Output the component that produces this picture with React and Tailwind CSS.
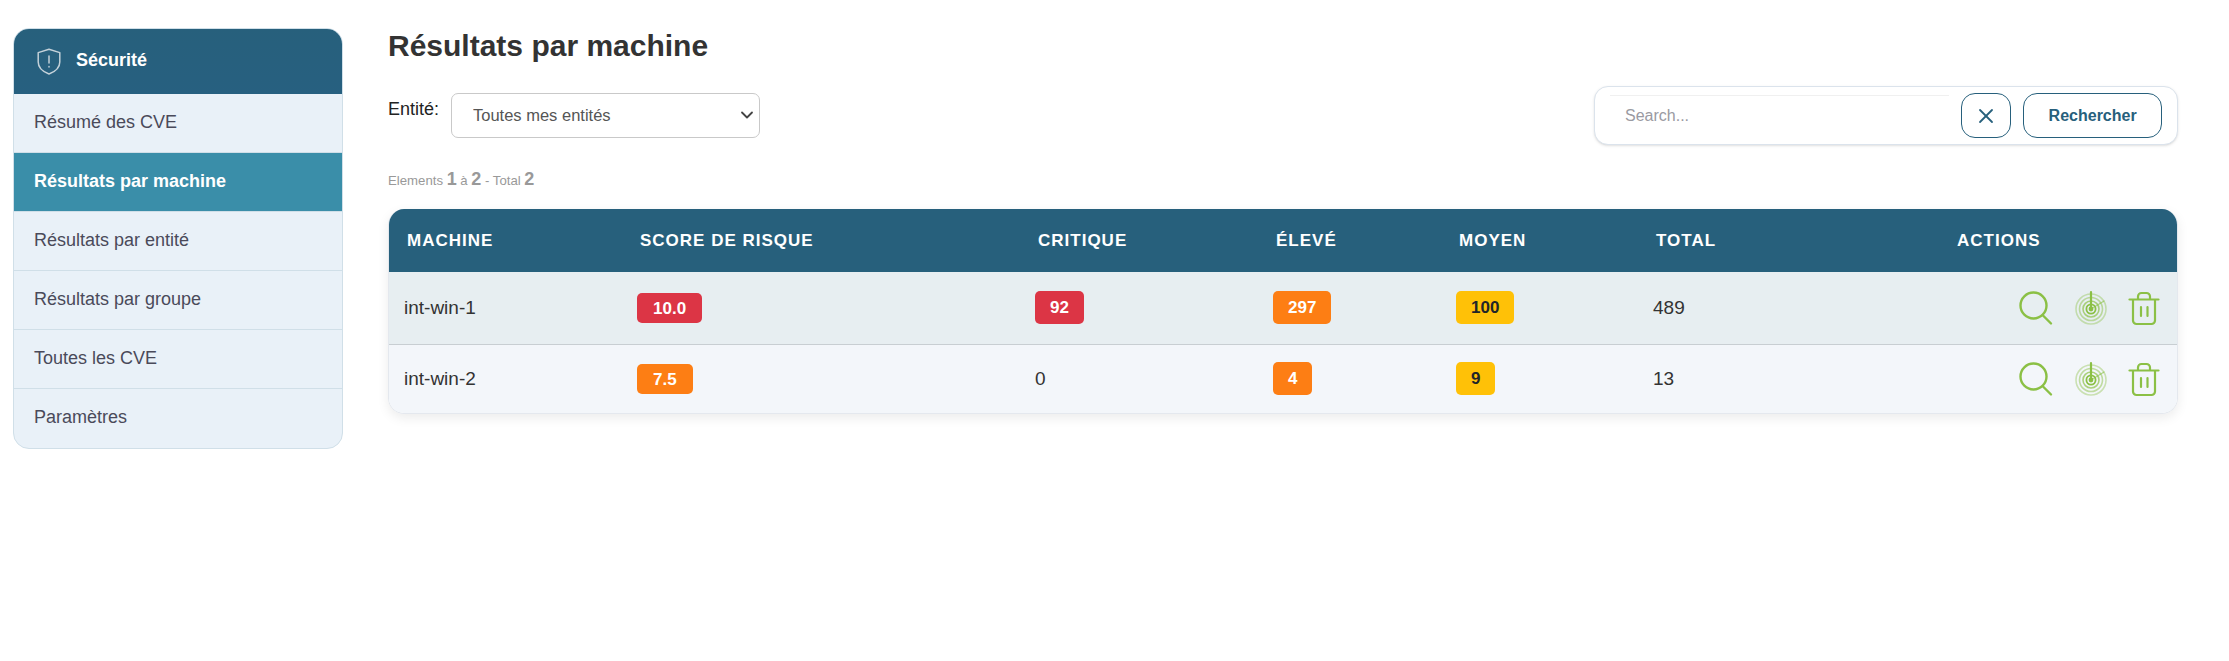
import { X, ChevronDown } from 'lucide-react';

const menu = ['Résumé des CVE', 'Résultats par machine', 'Résultats par entité', 'Résultats par groupe', 'Toutes les CVE', 'Paramètres'];

const rows = [
  { name: 'int-win-1', score: '10.0', scoreColor: 'bg-[#dc3545]', critique: '92', eleve: '297', moyen: '100', total: '489', bg: 'bg-[#e7eef1]', border: 'border-b border-[#c8ced2]', h: 'h-[72px]' },
  { name: 'int-win-2', score: '7.5', scoreColor: 'bg-[#fd7e14]', critique: 0, eleve: '4', moyen: '9', total: '13', bg: 'bg-[#f3f6fa]', border: '', h: 'h-[69px]' },
];

function Badge({ color, dark, small, children }) {
  return (
    <span className={`inline-flex items-center justify-center rounded-[5px] font-bold text-[17px] leading-none ${small ? 'h-[30px] px-[16px] mt-[1px]' : 'h-[33px] px-[15px]'} ${color} ${dark ? 'text-[#212529]' : 'text-white'}`}>
      {children}
    </span>
  );
}

function ShieldIcon() {
  return (
    <svg width="24" height="27" viewBox="0 0 24 27" fill="none" stroke="#c3d1d9" strokeWidth="1.5" strokeLinecap="round" strokeLinejoin="round">
      <path d="M12 1.2L22.8 4.6V14c0 5.6-4.4 9.6-10.8 12C5.6 23.6 1.2 19.6 1.2 14V4.6z" />
      <path d="M12 8v7" />
      <path d="M12 18.6v.4" />
    </svg>
  );
}

function SearchIcon() {
  return (
    <svg width="36" height="36" viewBox="0 0 36 36" fill="none" stroke="#8bc045" strokeWidth="2.4" strokeLinecap="round">
      <circle cx="15.5" cy="15.5" r="13" />
      <path d="M25 25.5l8 8" />
    </svg>
  );
}

function RadarIcon() {
  return (
    <svg width="34" height="36" viewBox="0 0 34 36" fill="none" stroke="#8bc045" strokeLinecap="round">
      <circle cx="17" cy="19" r="15" strokeWidth="1.6" opacity="0.4" />
      <circle cx="17" cy="19" r="11.5" strokeWidth="1.6" opacity="0.5" />
      <circle cx="17" cy="19" r="8" strokeWidth="1.6" opacity="0.7" />
      <circle cx="17" cy="19" r="4.6" strokeWidth="1.8" />
      <circle cx="17" cy="19" r="2.4" fill="#8bc045" stroke="none" />
      <path d="M17 19V2" strokeWidth="2.2" />
      <path d="M17 19l13-8" strokeWidth="1.4" opacity="0.6" />
    </svg>
  );
}

function TrashIcon() {
  return (
    <svg width="32" height="36" viewBox="0 0 32 36" fill="none" stroke="#8bc045" strokeWidth="2.2" strokeLinecap="round" strokeLinejoin="round">
      <path d="M1.5 9.5h29" />
      <path d="M5 10v20.5a3.5 3.5 0 0 0 3.5 3.5h15a3.5 3.5 0 0 0 3.5-3.5V10" />
      <path d="M10 9V6.5A3.5 3.5 0 0 1 13.5 3h5A3.5 3.5 0 0 1 22 6.5V9" />
      <path d="M13 17v9M19.5 17v9" />
    </svg>
  );
}

export default function App() {
  return (
    <div className="flex min-h-[661px] bg-white font-['Liberation_Sans',Arial,sans-serif] text-[#333]">
      {/* Sidebar */}
      <aside className="w-[330px] ml-[13px] mt-[28px] self-start rounded-[16px] overflow-hidden border border-[#d0dfe8] bg-[#e9f1f8]">
        <div className="-mx-px -mt-px flex items-center h-[66px] pl-[24px] gap-[15px] bg-gradient-to-b from-[#27607c] to-[#276080] text-white font-bold text-[18px]">
          <ShieldIcon />
          <span className="-mt-[2px]">Sécurité</span>
        </div>
        {menu.map((item, i) => (
          <div
            key={item}
            className={`flex items-center h-[59px] pl-[20px] pb-[2px] text-[18px] ${i < menu.length - 1 ? 'border-b border-[#d0dfe8]' : ''} ${i === 1 ? 'bg-[#3a8ea9] text-white font-bold' : 'text-[#4a4a5a]'}`}
          >
            {item}
          </div>
        ))}
      </aside>

      {/* Main */}
      <main className="w-[1790px] ml-[45px]">
        <h1 className="mt-[28px] text-[30px] leading-[36px] font-bold text-[#333]">Résultats par machine</h1>

        <div className="flex justify-between items-start mt-[22px]">
          <div className="flex items-start mt-[7px]">
            <label className="text-[18px] leading-[21px] mt-[6px] text-[#222] w-[63px]">Entité:</label>
            <div className="relative">
              <select className="appearance-none w-[309px] h-[45px] pl-[21px] rounded-[7px] border border-[#c9c9c9] bg-white text-[16.5px] text-[#555]">
                <option>Toutes mes entités</option>
              </select>
              <ChevronDown size={20} strokeWidth={2.2} className="absolute right-[3px] top-[12px] text-[#444]" />
            </div>
          </div>
          <div className="flex items-center w-[584px] h-[59px] pl-[15px] pr-[15px] rounded-[14px] border border-[#dbe3ec] bg-white shadow-sm">
            <input
              placeholder="Search..."
              className="w-[340px] h-[41px] pl-[15px] text-[16px] bg-white border-t border-[#f0f0f0] placeholder:text-[#9a9aa2] outline-none"
            />
            <button className="ml-[12px] w-[50px] h-[45px] flex items-center justify-center rounded-[14px] border border-[#27607c] text-[#27607c]">
              <X size={24} strokeWidth={1.8} />
            </button>
            <button className="ml-[12px] w-[139px] h-[45px] rounded-[14px] border border-[#27607c] text-[#27607c] font-bold text-[16px]">
              Rechercher
            </button>
          </div>
        </div>

        <div className="mt-[23px] h-[22px] text-[13.2px] leading-[22px] text-[#999]">
          Elements <b className="text-[18px]">1</b> à <b className="text-[18px]">2</b> - Total <b className="text-[18px]">2</b>
        </div>

        <div className="mt-[19px] rounded-[16px] overflow-hidden shadow-[0_4px_12px_rgba(0,0,0,0.08)] border border-t-0 border-[#e4e8ee]">
          <table className="w-full table-fixed border-collapse">
            <colgroup>
              <col className="w-[232px]" />
              <col className="w-[398px]" />
              <col className="w-[238px]" />
              <col className="w-[183px]" />
              <col className="w-[197px]" />
              <col className="w-[301px]" />
              <col />
            </colgroup>
            <thead>
              <tr className="h-[63px] bg-[#27607c] text-white text-[17px] font-bold tracking-[1px] text-left">
                <th className="pl-[18px]">MACHINE</th>
                <th className="pl-[19px]">SCORE DE RISQUE</th>
                <th className="pl-[19px]">CRITIQUE</th>
                <th className="pl-[19px]">ÉLEVÉ</th>
                <th className="pl-[19px]">MOYEN</th>
                <th className="pl-[19px]">TOTAL</th>
                <th className="pl-[19px]">ACTIONS</th>
              </tr>
            </thead>
            <tbody>
              {rows.map((r) => (
                <tr key={r.name} className={`${r.h} ${r.bg} ${r.border} text-[19px] text-[#333]`}>
                  <td className="pl-[15px]">{r.name}</td>
                  <td className="pl-[16px]"><Badge color={r.scoreColor} small>{r.score}</Badge></td>
                  <td className="pl-[16px]">{r.critique === 0 ? 0 : <Badge color="bg-[#dc3545]">{r.critique}</Badge>}</td>
                  <td className="pl-[16px]"><Badge color="bg-[#fd7e14]">{r.eleve}</Badge></td>
                  <td className="pl-[16px]"><Badge color="bg-[#ffc107]" dark>{r.moyen}</Badge></td>
                  <td className="pl-[16px]">{r.total}</td>
                  <td className="pr-[17px]">
                    <div className="flex justify-end items-center gap-[20px]">
                      <SearchIcon />
                      <RadarIcon />
                      <TrashIcon />
                    </div>
                  </td>
                </tr>
              ))}
            </tbody>
          </table>
        </div>
      </main>
    </div>
  );
}
